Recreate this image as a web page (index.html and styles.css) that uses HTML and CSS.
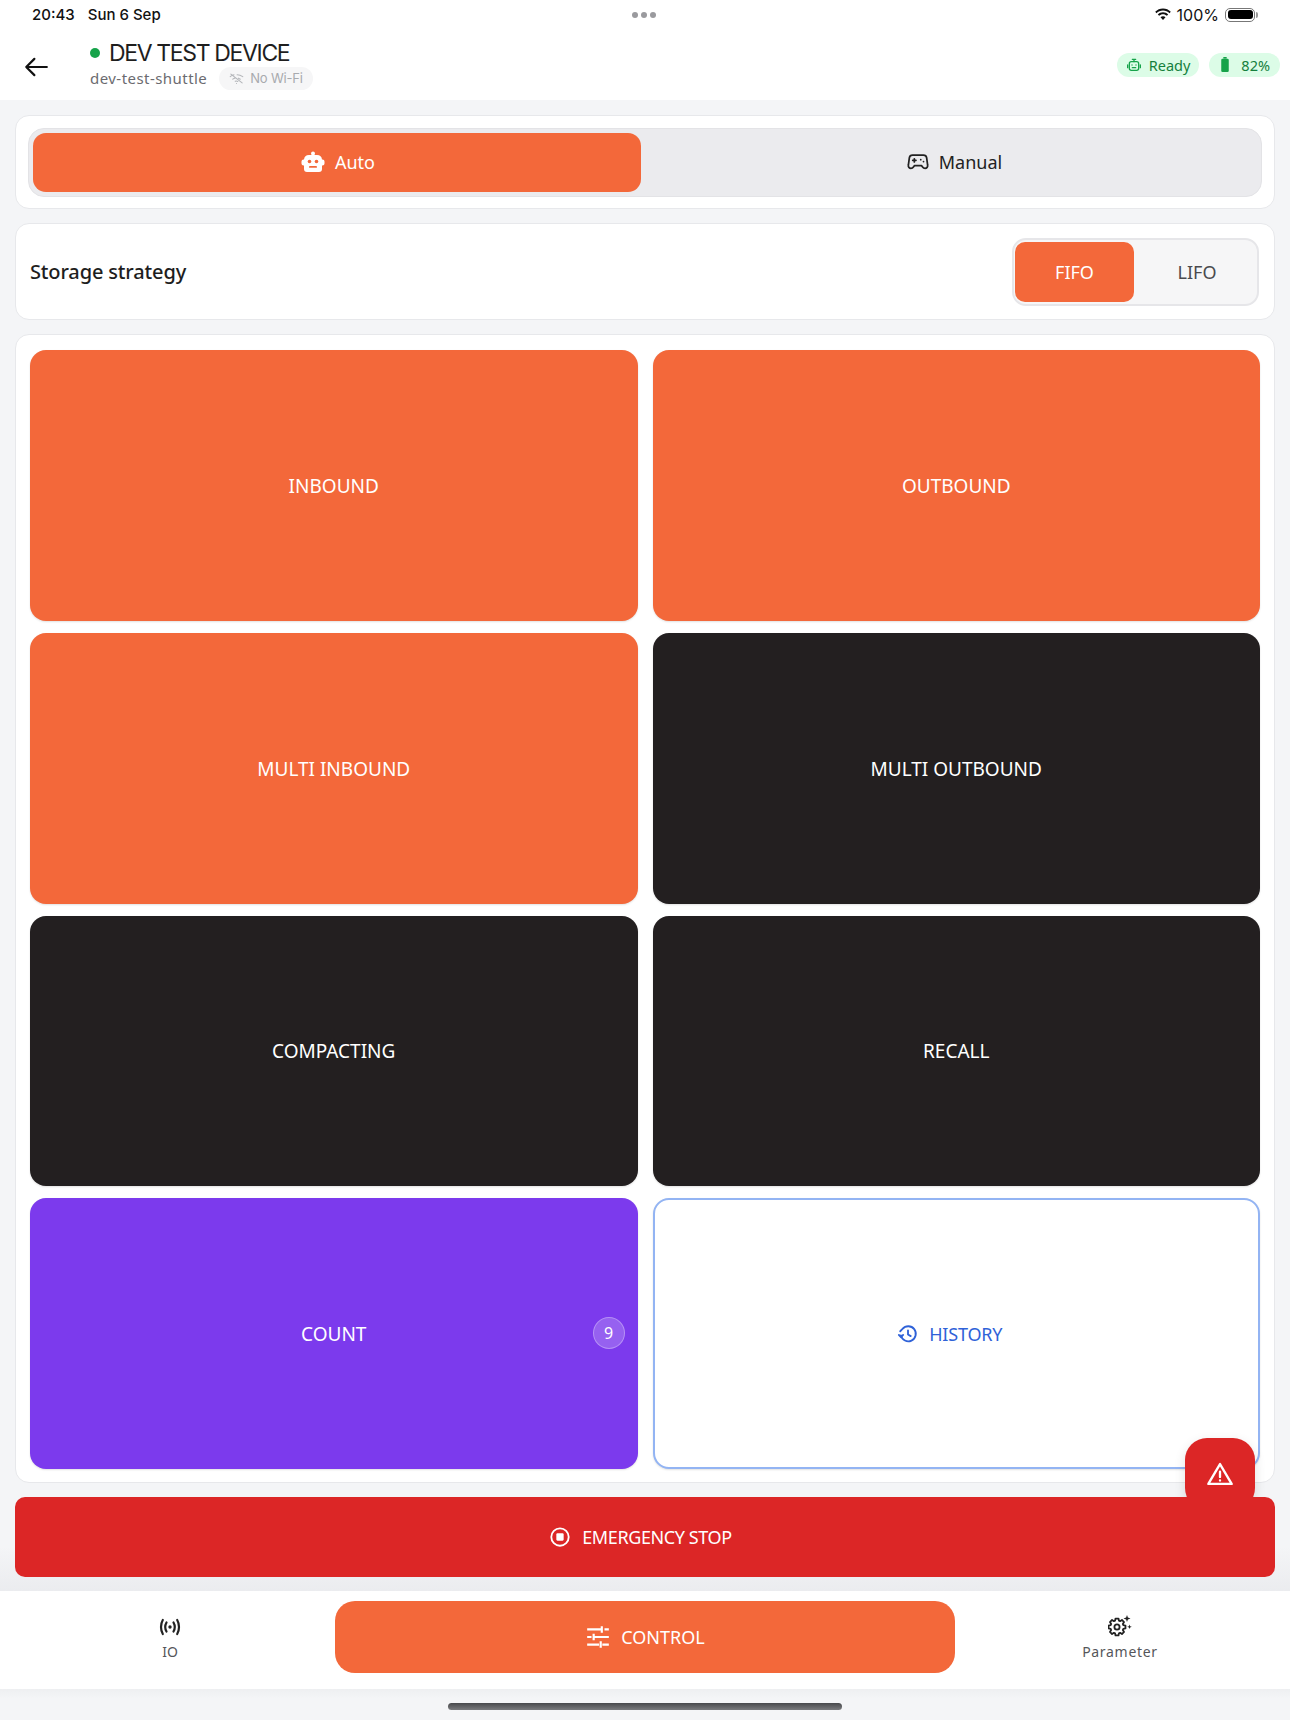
FILE: index.html
```html
<!DOCTYPE html>
<html lang="en">
<head>
    <meta charset="UTF-8">
    <meta name="viewport" content="width=device-width, initial-scale=1.0">
    <title>DEV TEST DEVICE</title>
    <link rel="stylesheet" href="styles.css">
</head>
<body>
    <div class="app">
        <!-- iPad status bar -->
        <div class="status-bar">
            <div class="status-time"><span>20:43</span><span>Sun 6 Sep</span></div>
            <div class="status-dots"><i></i><i></i><i></i></div>
            <div class="status-right">
                <svg class="status-wifi" viewBox="0 0 18 13" width="18" height="13"><path d="M9 2.600c2.500 0 4.800 1 6.500 2.600l1.300-1.400C14.700 1.700 12 .5 9 .5S3.300 1.700 1.200 3.800l1.300 1.400C4.200 3.600 6.500 2.600 9 2.600z"/><path d="M9 6.300c1.500 0 2.800.6 3.900 1.500l1.300-1.400C12.800 5.100 11 4.300 9 4.300s-3.800.8-5.200 2.100l1.300 1.400C6.200 6.900 7.500 6.300 9 6.300z"/><path d="M9 8.200c-1 0-1.800.4-2.500 1L9 12l2.500-2.800c-.7-.6-1.500-1-2.500-1z"/></svg>
                <span>100%</span>
                <span class="status-battery"><b></b></span>
            </div>
        </div>

        <header class="top-header">
            <svg class="back-arrow" viewBox="0 0 24 24" width="26" height="26" fill="none" stroke="#111" stroke-width="2" stroke-linecap="round" stroke-linejoin="round"><path d="M22 12H3M10.500 4.500 3 12l7.500 7.500"/></svg>
            <div class="device-info">
                <div class="device-title"><span class="online-dot"></span>DEV TEST DEVICE</div>
                <div class="device-sub">
                    <span>dev-test-shuttle</span>
                    <span class="wifi-chip">
                        <svg viewBox="0 0 24 24" width="15" height="15" fill="none" stroke="#b4b6ba" stroke-width="1.800" stroke-linecap="round"><path d="M3 5l18 14M2 9c2-1.600 4-2.500 6-2.900M13 6c3.500.2 6.500 1.400 9 3M6 13c1.300-1 2.500-1.500 4-1.800M15 11.500c1.200.4 2.200 1 3 1.600M10 16.500c1.200-.7 2.500-.7 4 .2M12 20h.01"/></svg>
                        No Wi-Fi
                    </span>
                </div>
            </div>
            <div class="header-badges">
                <span class="badge badge-ready">
                    <svg viewBox="0 0 24 24" width="16" height="16" fill="none" stroke="#16a34a" stroke-width="2" stroke-linecap="round" stroke-linejoin="round"><rect x="5" y="7" width="14" height="13" rx="3"/><path d="M12 7V3.500M9.500 3.500h5M2.500 12v4M21.500 12v4M9 12h.01M15 12h.01M9.500 16h5"/></svg>
                    Ready
                </span>
                <span class="badge badge-battery">
                    <svg viewBox="0 0 12 18" width="10" height="15" fill="#16a34a"><rect x="4" y="0" width="4" height="2"/><rect x="1.500" y="2" width="9" height="16" rx="1.500"/></svg>
                    82%
                </span>
            </div>
        </header>

        <main class="content">
            <section class="card mode-card">
                <div class="mode-toggle">
                    <button class="mode-btn active">
                        <svg viewBox="0 0 24 24" width="24" height="24" fill="#fff"><circle cx="12" cy="3.500" r="2"/><path d="M8 5h8a5 5 0 0 1 5 4.500h.5a2 2 0 0 1 2 2v2a2 2 0 0 1-2 2H21v3.500a3 3 0 0 1-3 3H6a3 3 0 0 1-3-3V15.500h-.5a2 2 0 0 1-2-2v-2a2 2 0 0 1 2-2H3A5 5 0 0 1 8 5z"/><circle cx="8.500" cy="11.500" r="1.800" fill="#f3683a"/><circle cx="15.500" cy="11.500" r="1.800" fill="#f3683a"/><rect x="8" y="16" width="8" height="1.800" rx=".9" fill="#f3683a"/></svg>
                        Auto
                    </button>
                    <button class="mode-btn">
                        <svg viewBox="0 0 24 24" width="22" height="22" fill="none" stroke="#222" stroke-width="1.900" stroke-linecap="round" stroke-linejoin="round"><path d="M6 4.500h12a3.500 3.500 0 0 1 3.400 2.800l1.100 8c.4 2-1 3.700-2.800 3.700-1.200 0-2.100-.6-2.700-1.500L15.800 16H8.200l-1.200 1.500c-.6.900-1.500 1.500-2.700 1.500-1.800 0-3.200-1.700-2.800-3.700l1.100-8A3.500 3.500 0 0 1 6 4.500z"/><path d="M8 8.500v3.500M6.200 10.200h3.600M15 9.500h.01M18 11.500h.01"/></svg>
                        Manual
                    </button>
                </div>
            </section>

            <section class="card strategy-card">
                <span class="strategy-label">Storage strategy</span>
                <div class="segment">
                    <button class="segment-btn active">FIFO</button>
                    <button class="segment-btn">LIFO</button>
                </div>
            </section>

            <section class="card action-card">
                <div class="action-grid">
                    <button class="action-btn orange">INBOUND</button>
                    <button class="action-btn orange">OUTBOUND</button>
                    <button class="action-btn orange">MULTI INBOUND</button>
                    <button class="action-btn dark">MULTI OUTBOUND</button>
                    <button class="action-btn dark">COMPACTING</button>
                    <button class="action-btn dark">RECALL</button>
                    <button class="action-btn purple">COUNT<span class="count-badge">9</span></button>
                    <button class="action-btn outline">
                        <svg viewBox="0 0 24 24" width="22" height="22" fill="none" stroke="#2f62d8" stroke-width="2" stroke-linecap="round" stroke-linejoin="round"><path d="M4.300 13.500A8.200 8.200 0 1 0 6 6.500L3.500 9"/><path d="M2 13l2.300 2.500L6.700 13M12 8v4.500l3 1.800"/></svg>
                        HISTORY
                    </button>
                </div>
            </section>

            <button class="stop-btn">
                <svg viewBox="0 0 24 24" width="22" height="22" fill="none" stroke="#fff" stroke-width="2"><circle cx="12" cy="12" r="9.500"/><rect x="8" y="8" width="8" height="8" rx="1.200" fill="#fff" stroke="none"/></svg>
                EMERGENCY STOP
            </button>
        </main>

        <!-- alert button sits under the stop button -->
        <button class="alert-fab">
            <svg viewBox="0 0 24 24" width="28" height="28" fill="none" stroke="#fff" stroke-width="2" stroke-linecap="round" stroke-linejoin="round"><path d="M12 3.500 2 20.500h20z"/><path d="M12 10v4.500M12 17.500h.01"/></svg>
        </button>

        <nav class="bottom-nav">
            <div class="nav-item nav-io">
                <svg viewBox="0 0 24 24" width="24" height="24" fill="none" stroke="#222" stroke-width="2.200" stroke-linecap="round"><circle cx="12" cy="12" r="1.700" fill="#222" stroke="none"/><path d="M8.500 7.500c-1.600 2.800-1.600 6.200 0 9M15.500 7.500c1.600 2.800 1.600 6.200 0 9M4.800 5C2.400 9 2.400 15 4.800 19M19.200 5c2.400 4 2.400 10 0 14"/></svg>
                <span>IO</span>
            </div>
            <button class="nav-main">
                <svg viewBox="0 0 24 24" width="26" height="26" fill="none" stroke="#fff" stroke-width="2"><path d="M2 5h13M18 5h4M15.500 2v6M2 12h4M9 12h13M8 9v6M2 19h11M16 19h6M14.500 16v6"/></svg>
                CONTROL
            </button>
            <div class="nav-item nav-param">
                <svg viewBox="0 0 24 24" width="24" height="24" fill="none" stroke="#222" stroke-width="1.800" stroke-linejoin="round"><polygon points="7.070 5.690 7.510 3.530 10.490 3.530 10.930 5.690 12.100 6.170 13.940 4.960 16.040 7.060 14.830 8.900 15.310 10.070 17.470 10.510 17.470 13.490 15.310 13.930 14.830 15.100 16.040 16.940 13.940 19.040 12.100 17.830 10.930 18.310 10.490 20.470 7.510 20.470 7.070 18.310 5.900 17.830 4.060 19.040 1.960 16.940 3.170 15.100 2.690 13.930 .53 13.490 .53 10.510 2.690 10.070 3.170 8.900 1.960 7.060 4.060 4.960 5.900 6.170"/><circle cx="9" cy="12" r="2.600"/><path d="M19 0l.9 2.600 2.600.9-2.600.9-.9 2.600-.9-2.600-2.600-.9 2.600-.9zM21.500 9.500l.6 1.700 1.700.6-1.700.6-.6 1.700-.6-1.700-1.700-.6 1.700-.6z" fill="#222" stroke="none"/></svg>
                <span>Parameter</span>
            </div>
        </nav>

        <div class="home-area"><div class="home-bar"></div></div>
    </div>
</body>
</html>
```

FILE: styles.css
```css
* {
    box-sizing: border-box;
}

body {
    margin: 0;
    font-family: "Noto Sans", sans-serif;
    background: #f4f5f7;
    color: #222;
}

button {
    font-family: inherit;
    border: none;
    cursor: pointer;
}

.app {
    position: relative;
    width: 1290px;
    height: 1720px;
    display: flex;
    flex-direction: column;
    overflow: hidden;
}

/* status bar */
.status-bar {
    height: 30px;
    background: #fff;
    padding: 0 35px 1px 32px;
    display: flex;
    align-items: center;
    justify-content: space-between;
    font-family: Inter, sans-serif;
    font-size: 15px;
    font-weight: 500;
    color: #111;
}

.status-time {
    display: flex;
    gap: 13px;
    width: 300px;
}

.status-dots {
    display: flex;
    gap: 3px;
    margin-top: 1px;
}

.status-dots i {
    width: 6px;
    height: 6px;
    border-radius: 50%;
    background: #9a9a9e;
}

.status-right {
    width: 300px;
    display: flex;
    align-items: center;
    justify-content: flex-end;
    gap: 5px;
    font-size: 16px;
    font-weight: 400;
}

.status-wifi {
    fill: #111;
}

.status-battery {
    position: relative;
    width: 30px;
    height: 14px;
    margin-left: 1px;
    border: 1px solid #777;
    border-radius: 5px;
    padding: 1.500px;
}

.status-battery b {
    display: block;
    height: 100%;
    background: #000;
    border-radius: 3px;
}

.status-battery::after {
    content: "";
    position: absolute;
    right: -4px;
    top: 3px;
    width: 2px;
    height: 6px;
    background: #999;
    border-radius: 0 2px 2px 0;
}

/* header */
.top-header {
    height: 70px;
    background: #fff;
    padding: 0 10px 0 23px;
    display: flex;
    align-items: center;
    position: relative;
}

.back-arrow {
    margin-right: 41px;
    margin-top: 3px;
}

.device-info {
    flex: 1;
    margin-top: -3px;
}

.device-title {
    display: flex;
    align-items: center;
    font-family: Inter, sans-serif;
    font-size: 23px;
    font-weight: 400;
    letter-spacing: -1.350px;
    line-height: 30px;
    color: #1e1e1e;
}

.online-dot {
    width: 10px;
    height: 10px;
    border-radius: 50%;
    background: #16a34a;
    margin-right: 9px;
}

.device-sub {
    display: flex;
    align-items: center;
    gap: 12px;
    font-size: 15px;
    letter-spacing: 0.45px;
    color: #6b6b70;
    margin-top: -1px;
}

.wifi-chip {
    display: inline-flex;
    align-items: center;
    gap: 6px;
    height: 23px;
    padding: 0 10px;
    border-radius: 12px;
    background: #f6f6f7;
    font-family: Inter, sans-serif;
    font-size: 13px;
    letter-spacing: -0.2px;
    color: #a8aaae;
}

.header-badges {
    display: flex;
    gap: 10px;
    margin-top: -1px;
}

.badge {
    display: inline-flex;
    align-items: center;
    height: 24px;
    border-radius: 12px;
    background: #dcfce7;
    color: #15803d;
    font-size: 14.500px;
}

.badge-ready {
    gap: 7px;
    padding: 0 9px;
}

.badge-battery {
    gap: 11px;
    padding: 0 10px 0 11px;
}

/* main */
.content {
    flex: 1;
    padding: 15px 15px 14px;
    display: flex;
    flex-direction: column;
    gap: 14px;
    background: linear-gradient(#f4f5f7 97%, #ebecef);
}

.card {
    background: #fff;
    border: 1px solid #e7e8eb;
    border-radius: 14px;
}

.mode-card {
    height: 94px;
    padding: 12px;
}

.mode-toggle {
    height: 69px;
    display: flex;
    padding: 4px 0 4px 4px;
    background: #ebebee;
    border: 1px solid #e3e3e6;
    border-radius: 16px;
}

.mode-btn {
    flex: 1;
    display: flex;
    align-items: center;
    justify-content: center;
    gap: 10px;
    padding: 0 0 2px 7px;
    background: transparent;
    color: #222;
    font-size: 18px;
    border-radius: 13px;
}

.mode-btn.active {
    flex: 0 0 608px;
    padding-left: 2px;
    background: #f3683a;
    color: #fff;
}

.strategy-card {
    height: 97px;
    padding: 0 15px 0 14px;
    display: flex;
    align-items: center;
    justify-content: space-between;
}

.strategy-label {
    font-size: 20px;
    font-weight: 500;
    letter-spacing: -0.15px;
    color: #1e1e1e;
}

.segment {
    width: 247px;
    height: 68px;
    padding: 2px 0 2px 1px;
    display: flex;
    background: #f6f6f7;
    border: 2px solid #e6e6e9;
    border-radius: 14px;
}

.segment-btn {
    flex: 1;
    padding: 0 0 0 3px;
    background: transparent;
    font-size: 18px;
    color: #4a4a4e;
    border-radius: 10px;
}

.segment-btn.active {
    flex: 0 0 119px;
    padding: 0;
    background: #f3683a;
    color: #fff;
}

.action-card {
    flex: 1;
    padding: 15px 14px 13px;
}

.action-grid {
    height: 100%;
    display: grid;
    grid-template-columns: 1fr 1fr;
    grid-template-rows: repeat(4, 1fr);
    gap: 12px 15px;
}

.action-btn {
    position: relative;
    display: flex;
    align-items: center;
    justify-content: center;
    gap: 10px;
    padding: 1px 0 0;
    font-size: 19px;
    color: #fff;
    border-radius: 16px;
    box-shadow: 0 1px 2px rgba(0, 0, 0, 0.12);
}

.action-btn.orange {
    background: #f3683a;
}

.action-btn.dark {
    background: #231f20;
}

.action-btn.purple {
    background: #7c3aed;
}

.action-btn.outline {
    background: #fff;
    border: 2px solid #93b4f3;
    color: #2f62d8;
    font-size: 18px;
    letter-spacing: -0.2px;
    padding-right: 13px;
}

.count-badge {
    position: absolute;
    right: 13px;
    top: 50%;
    width: 32px;
    height: 32px;
    margin-top: -17px;
    display: flex;
    align-items: center;
    justify-content: center;
    font-size: 16px;
    background: rgba(255, 255, 255, 0.2);
    border: 1px solid rgba(255, 255, 255, 0.3);
    border-radius: 50%;
}

.stop-btn {
    position: relative;
    z-index: 2;
    height: 80px;
    flex: none;
    display: flex;
    align-items: center;
    justify-content: center;
    gap: 11px;
    padding-right: 15px;
    background: #dc2626;
    color: #fff;
    font-size: 18px;
    letter-spacing: -0.4px;
    border-radius: 10px;
}

.alert-fab {
    position: absolute;
    right: 35px;
    top: 1438px;
    z-index: 1;
    width: 70px;
    height: 72px;
    display: flex;
    align-items: center;
    justify-content: center;
    background: #dc2626;
    border-radius: 22px;
    box-shadow: 0 4px 12px rgba(0, 0, 0, 0.12);
}

/* bottom nav */
.bottom-nav {
    height: 98px;
    flex: none;
    padding-top: 10px;
    background: #fff;
    display: grid;
    grid-template-columns: 335px 620px 335px;
    align-items: start;
}

.nav-item {
    display: flex;
    flex-direction: column;
    align-items: center;
    gap: 3px;
    margin-top: 14px;
    font-size: 14px;
    color: #55565a;
}

.nav-io {
    padding-left: 5px;
}

.nav-param {
    padding-right: 5px;
    letter-spacing: 0.7px;
}

.nav-main {
    height: 72px;
    display: flex;
    align-items: center;
    justify-content: center;
    gap: 10px;
    padding-top: 1px;
    background: #f3683a;
    color: #fff;
    font-size: 18px;
    border-radius: 20px;
}

.home-area {
    height: 31px;
    flex: none;
    display: flex;
    justify-content: center;
    padding-top: 14px;
    background: linear-gradient(#eeeff1, #f4f5f7 30%);
}

.home-bar {
    width: 394px;
    height: 7px;
    border-radius: 4px;
    background: linear-gradient(#48494c, #7a7b7e);
}
```
